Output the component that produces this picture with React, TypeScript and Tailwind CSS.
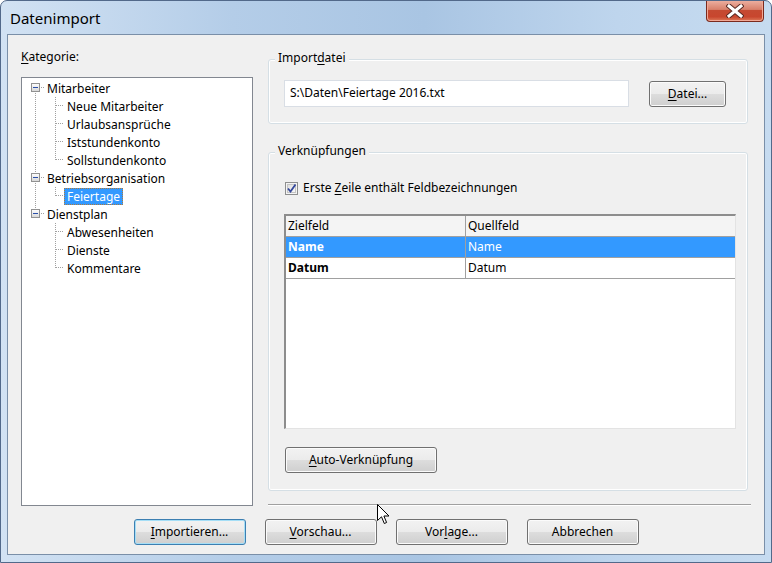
import React from "react";

type TreeNode = { label: string; children: string[] };

const tree: TreeNode[] = [
  { label: "Mitarbeiter", children: ["Neue Mitarbeiter", "Urlaubsansprüche", "Iststundenkonto", "Sollstundenkonto"] },
  { label: "Betriebsorganisation", children: ["Feiertage"] },
  { label: "Dienstplan", children: ["Abwesenheiten", "Dienste", "Kommentare"] },
];

const dot = "#a0a0a0";

function RootGlyph({ first, last }: { first: boolean; last: boolean }) {
  return (
    <svg width="22" height="18" className="shrink-0" shapeRendering="crispEdges">
      {!first && <line x1="13.5" y1="0" x2="13.5" y2="4" stroke={dot} strokeDasharray="1 1" />}
      {!last && <line x1="13.5" y1="14" x2="13.5" y2="18" stroke={dot} strokeDasharray="1 1" />}
      <line x1="19" y1="8.5" x2="22" y2="8.5" stroke={dot} strokeDasharray="1 1" />
      <defs>
        <linearGradient id="exp" x1="0" y1="0" x2="0" y2="1">
          <stop offset="0" stopColor="#ffffff" />
          <stop offset="1" stopColor="#d6d6d6" />
        </linearGradient>
      </defs>
      <rect x="9.5" y="4.5" width="8" height="8" fill="url(#exp)" stroke="#919191" />
      <line x1="11" y1="8.5" x2="16" y2="8.5" stroke="#2a4fa8" />
    </svg>
  );
}

function ChildGlyph({ rootLine, last }: { rootLine: boolean; last: boolean }) {
  return (
    <svg width="42" height="18" className="shrink-0" shapeRendering="crispEdges">
      {rootLine && <line x1="13.5" y1="0" x2="13.5" y2="18" stroke={dot} strokeDasharray="1 1" />}
      <line x1="33.5" y1="0" x2="33.5" y2={last ? 9 : 18} stroke={dot} strokeDasharray="1 1" />
      <line x1="34" y1="8.5" x2="42" y2="8.5" stroke={dot} strokeDasharray="1 1" />
    </svg>
  );
}

function TreeLabel({ text, selected }: { text: string; selected?: boolean }) {
  return (
    <span
      className={
        selected
          ? "h-[17px] px-[2px] leading-[15px] border border-dotted border-[#b07a3a] bg-[#3399ff] text-white"
          : "h-[17px] px-[2px] leading-[15px] border border-transparent text-black"
      }
    >
      {text}
    </span>
  );
}

function Btn({ children, wide, isDefault }: { children: React.ReactNode; wide?: string; isDefault?: boolean }) {
  return (
    <button
      className={
        (wide ?? "w-[112px]") +
        " h-[26px] rounded-[3px] border text-[12px] text-black bg-[linear-gradient(#f2f2f2,#ebebeb_50%,#dddddd_50%,#cfcfcf)] " +
        (isDefault
          ? "border-[#3c7fb1] shadow-[inset_0_0_0_1px_#a5def6]"
          : "border-[#707070] shadow-[inset_0_0_0_1px_#fbfbfb]")
      }
    >
      {children}
    </button>
  );
}

function GroupLabel({ children }: { children: React.ReactNode }) {
  return <div className="-mt-[10px] ml-[6px] px-[3px] w-fit bg-[#f0f0f0] leading-[16px]">{children}</div>;
}

export default function App() {
  return (
    <div className="relative w-[772px] h-[563px] flex flex-col rounded-t-[7px] border border-[#52698a] bg-[linear-gradient(90deg,#d2e2f3,#b4cde8_30%,#a9c5e3_55%,#bed5ed_80%,#c6dbf0)] font-['Noto_Sans',sans-serif] text-[12px] text-black overflow-hidden">
      {/* title bar */}
      <div className="h-[33px] flex items-start justify-between">
        <div className="pl-[9px] pt-[8px] text-[15px] leading-[18px]">Datenimport</div>
        <div className="-mt-[1px] mr-[7px] w-[58px] h-[22px] rounded-b-[4px] border border-t-0 border-[#7a2a1e] bg-[linear-gradient(#eeb3a4,#d8806b_45%,#c54a32_50%,#c8462e_80%,#dd7a5a)] shadow-[inset_0_0_0_1px_#f1a896] flex items-center justify-center">
          <svg width="18" height="14" viewBox="0 0 18 14">
            <path d="M3 2 L15 12 M15 2 L3 12" stroke="#5a2b24" strokeWidth="5" strokeLinecap="square" />
            <path d="M3 2 L15 12 M15 2 L3 12" stroke="#ffffff" strokeWidth="3" strokeLinecap="square" />
          </svg>
        </div>
      </div>

      {/* client area */}
      <div className="flex-1 mx-[6px] mb-[7px] border border-[#7a8fa8] bg-[#f0f0f0] flex flex-col">
        <div className="flex h-[471px]">
          {/* left column */}
          <div className="ml-[13px] w-[232px] pt-[14px] flex flex-col">
            <div className="leading-[16px]">
              <span className="underline underline-offset-2">K</span>ategorie:
            </div>
            <div className="mt-[12px] flex-1 bg-white border border-[#828790] pt-[1px] flex flex-col">
              {tree.map((node, i) => (
                <React.Fragment key={node.label}>
                  <div className="h-[18px] flex items-center">
                    <RootGlyph first={i === 0} last={i === tree.length - 1} />
                    <TreeLabel text={node.label} />
                  </div>
                  {node.children.map((c, j) => (
                    <div key={c} className="h-[18px] flex items-center">
                      <ChildGlyph rootLine={i !== tree.length - 1} last={j === node.children.length - 1} />
                      <TreeLabel text={c} selected={c === "Feiertage"} />
                    </div>
                  ))}
                </React.Fragment>
              ))}
            </div>
          </div>

          {/* right column */}
          <div className="ml-[15px] w-[483px] flex flex-col">
            <div className="mt-[24px] w-[480px] h-[65px] rounded-[3px] border border-[#d5dfe5] shadow-[inset_0_0_0_1px_#ffffff]">
              <GroupLabel>
                Import<span className="underline underline-offset-2">d</span>atei
              </GroupLabel>
              <div className="mt-[14px] ml-[15px] flex items-start">
                <div className="w-[345px] h-[27px] bg-white border border-[#d9dee5] pl-[5px] leading-[24px]">
                  {"S:\\Daten\\Feiertage 2016.txt"}
                </div>
                <div className="ml-[20px] mt-[1px]">
                  <Btn wide="w-[77px]">
                    <span className="underline underline-offset-2">D</span>atei...
                  </Btn>
                </div>
              </div>
            </div>

            <div className="mt-[28px] w-[480px] h-[339px] rounded-[3px] border border-[#d5dfe5] shadow-[inset_0_0_0_1px_#ffffff] flex flex-col">
              <GroupLabel>Verknüpfungen</GroupLabel>
              <div className="mt-[21px] ml-[16px] h-[16px] flex items-center">
                <svg width="13" height="13" className="shrink-0">
                  <defs>
                    <linearGradient id="cb" x1="0" y1="0" x2="1" y2="1">
                      <stop offset="0" stopColor="#dcdcdc" />
                      <stop offset="1" stopColor="#fbfbfb" />
                    </linearGradient>
                  </defs>
                  <rect x="0.5" y="0.5" width="12" height="12" fill="#f4f4f4" stroke="#8e8f8f" />
                  <rect x="2.5" y="2.5" width="8" height="8" fill="url(#cb)" stroke="#c4c4c4" />
                  <path d="M3 6.5 L5.5 9.5 L10.5 2.5" fill="none" stroke="#34489c" strokeWidth="1.8" />
                </svg>
                <span className="ml-[5px] leading-[16px]">
                  Erste <span className="underline underline-offset-2">Z</span>eile enthält Feldbezeichnungen
                </span>
              </div>

              <div className="mt-[18px] ml-[15px] w-[452px] h-[215px] bg-white border-t-2 border-l-2 border-r border-b border-t-[#8d8d8d] border-l-[#8d8d8d] border-r-[#e3e3e3] border-b-[#e3e3e3] flex flex-col">
                <div className="h-[21px] flex border-b border-[#a0a0a0] bg-[#f4f4f4] leading-[20px]">
                  <div className="w-[180px] pl-[2px] border-r border-[#a0a0a0]">Zielfeld</div>
                  <div className="pl-[2px]">Quellfeld</div>
                </div>
                <div className="h-[21px] flex border-b border-[#a0a0a0] bg-[#3399ff] text-white leading-[20px]">
                  <div className="w-[180px] pl-[2px] border-r border-[#a0a0a0] font-bold">Name</div>
                  <div className="pl-[2px]">Name</div>
                </div>
                <div className="h-[21px] flex border-b border-[#a0a0a0] leading-[20px]">
                  <div className="w-[180px] pl-[2px] border-r border-[#a0a0a0] font-bold">Datum</div>
                  <div className="pl-[2px]">Datum</div>
                </div>
              </div>

              <div className="mt-[18px] ml-[16px]">
                <Btn wide="w-[152px]">
                  <span className="underline underline-offset-2">A</span>uto-Verknüpfung
                </Btn>
              </div>
            </div>

            <div className="mt-[13px] h-[2px] border-t border-[#a0a0a0] border-b border-b-white" />
          </div>
        </div>

        {/* bottom buttons */}
        <div className="mt-[13px] flex justify-center gap-[19px]">
          <Btn isDefault>
            <span className="underline underline-offset-2">I</span>mportieren...
          </Btn>
          <Btn>
            <span className="underline underline-offset-2">V</span>orschau...
          </Btn>
          <Btn>
            Vor<span className="underline underline-offset-2">l</span>age...
          </Btn>
          <Btn>Abbrechen</Btn>
        </div>
      </div>

      {/* mouse pointer */}
      <svg className="absolute left-[376px] top-[503px]" width="13" height="21" viewBox="0 0 13 21">
        <path d="M0.5 0.5 L0.5 16.5 L4.5 12.8 L7.3 19.5 L9.6 18.5 L6.9 12 L12 12 Z" fill="#ffffff" stroke="#000000" strokeLinejoin="round" />
      </svg>
    </div>
  );
}
